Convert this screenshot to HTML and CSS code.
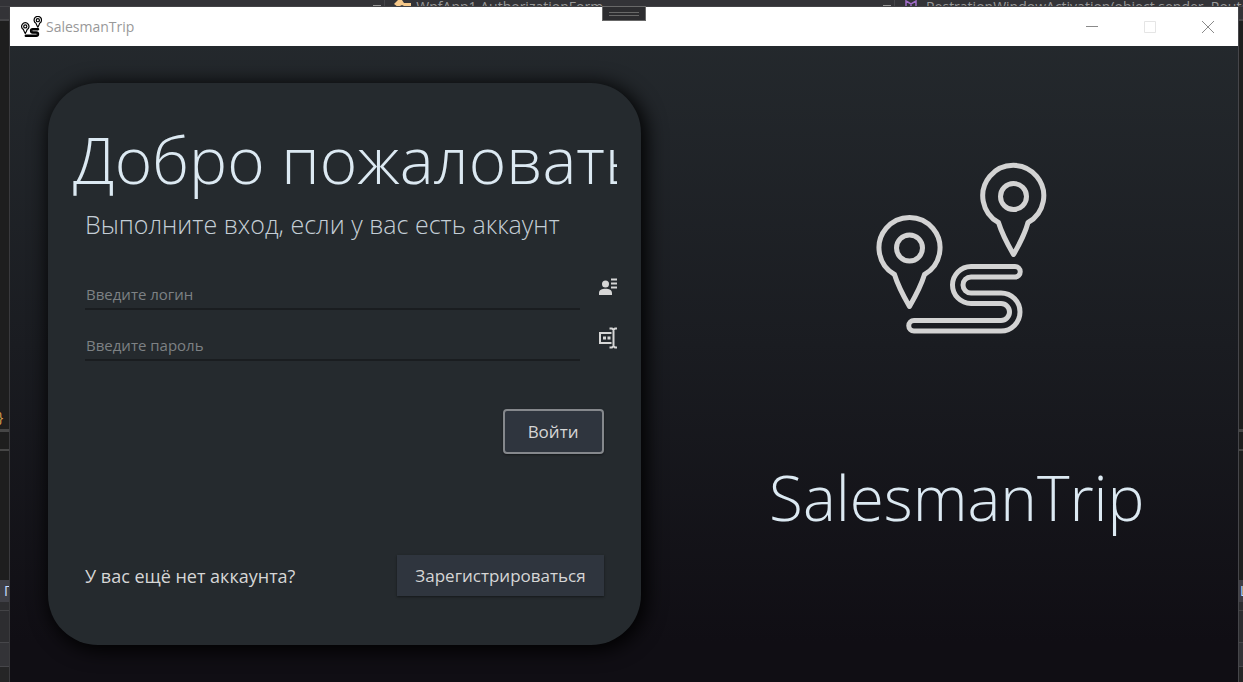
FILE: index.html
```html
<!DOCTYPE html>
<html lang="ru">
<head>
<meta charset="utf-8">
<title>SalesmanTrip</title>
<link rel="stylesheet" href="styles.css">
</head>
<body>
<svg class="defs" aria-hidden="true">
  <symbol id="route" viewBox="-1 -9 174 174">
    <g fill="none" stroke="currentColor" stroke-linejoin="round" stroke-linecap="round">
      <path d="M19.500 103.500 A30.500 30.500 0 1 1 49.500 103.500 C46 115 40 126 34.500 135.500 C29 126 23 115 19.500 103.500 Z"/>
      <circle cx="34.500" cy="77" r="13"/>
      <path d="M123.500 51.500 A30.500 30.500 0 1 1 153 51.500 C150 63 144 74 138.500 83.500 C133 74 127 63 123.500 51.500 Z"/>
      <circle cx="138.500" cy="25.500" r="13"/>
      <path d="M140 95.500 H96 A18.500 18.500 0 0 0 96 132.500 H126 A8.500 8.500 0 0 1 126 149.500 H39 A5 5 0 0 0 39 160 H126 A18.700 18.700 0 0 0 126 122 H96 A7.500 7.500 0 0 1 96 106 H140 A5.200 5.200 0 0 0 140 95.500 Z"/>
    </g>
  </symbol>
</svg>
<div class="desktop">
  <div class="ide-top">
    <div class="crumb crumb-empty"><span class="caret"></span></div>
    <div class="crumb crumb-class">
      <svg class="crumb-icon" viewBox="0 0 18 14" aria-hidden="true"><path fill="#f5c88a" d="M0 4 L4 0 H8 L10 3 H17 V7 H12 L8 5 L4 7 Z M9 8 H17 V12 H11 Z"/></svg>
      <span>WpfApp1.AuthorizationForm</span><span class="caret"></span>
    </div>
    <div class="crumb crumb-method">
      <svg class="crumb-icon crumb-small" viewBox="0 0 12 14" aria-hidden="true"><path fill="none" stroke="#a06cc8" stroke-width="1.500" d="M1 1 L6 4 L11 1 V10 L6 13 L1 10 Z M6 4 V13"/></svg>
      <span>RestrationWindowActivation(object sender, RoutedEventArgs e)</span>
    </div>
  </div>
  <div class="ide-side ide-left">
    <div class="side-head"></div>
    <div class="side-code"><span class="brace">}</span></div>
    <div class="side-bar"></div>
    <div class="side-blank"></div>
    <div class="side-tab">П</div>
    <div class="side-tools"></div>
    <div class="side-list"></div>
    <div class="side-foot"></div>
  </div>
  <main class="window">
    <header class="titlebar">
      <svg class="app-icon" aria-hidden="true"><use href="#route"/></svg>
      <span class="app-name">SalesmanTrip</span>
      <button class="win-btn" aria-label="Свернуть"><svg viewBox="0 0 12 12"><path d="M0 5.500 H12"/></svg></button>
      <button class="win-btn" aria-label="Развернуть" disabled><svg viewBox="0 0 12 12"><path d="M.500 .500 H11.500 V11.500 H.500 Z"/></svg></button>
      <button class="win-btn" aria-label="Закрыть"><svg viewBox="0 0 12 12"><path d="M0 0 L12 12 M12 0 L0 12"/></svg></button>
      <div class="grip"><span></span></div>
    </header>
    <div class="content">
      <form class="card">
        <h1>Добро пожаловать</h1>
        <p class="lead">Выполните вход, если у вас есть аккаунт</p>
        <div class="field">
          <input type="text" placeholder="Введите логин" aria-label="Введите логин">
          <svg class="field-icon" viewBox="0 0 18 22" aria-hidden="true"><g fill="#d6d6d6"><circle cx="6.500" cy="8" r="3.500"/><path d="M0 19 V17 C0 14 3 12.700 6.500 12.700 S13 14 13 17 V19 Z M12 2.500 H18 V4.500 H12 Z M12 6.500 H18 V8.500 H12 Z M12 10.500 H18 V12.500 H12 Z"/></g></svg>
        </div>
        <div class="field">
          <input type="password" placeholder="Введите пароль" aria-label="Введите пароль">
          <svg class="field-icon" viewBox="0 0 18 22" aria-hidden="true"><g fill="none" stroke="#d6d6d6" stroke-width="2"><path d="M12.500 6 H1 V16 H12.500 M10.500 1.500 H13 L14.500 3 L16 1.500 H18 M10.500 20.500 H13 L14.500 19 L16 20.500 H18 M14.500 2 V20"/></g><path fill="#d6d6d6" d="M4 9.500 H7 V12.500 H4 Z M8.500 9.500 H11.500 V12.500 H8.500 Z"/></svg>
        </div>
        <div class="actions"><button type="submit" class="btn btn-login">Войти</button></div>
        <div class="signup">
          <span>У вас ещё нет аккаунта?</span>
          <button type="button" class="btn">Зарегистрироваться</button>
        </div>
      </form>
      <section class="brand">
        <svg class="logo" aria-hidden="true"><use href="#route"/></svg>
        <h2>SalesmanTrip</h2>
      </section>
    </div>
  </main>
  <div class="ide-side ide-right">
    <div class="side-head"></div>
    <div class="side-code"></div>
    <div class="side-bar"></div>
    <div class="side-blank"></div>
    <div class="side-tab">Ц</div>
    <div class="side-tools"></div>
    <div class="side-list"></div>
    <div class="side-foot"></div>
  </div>
</div>
</body>
</html>
```
FILE: styles.css
```css
* { box-sizing: border-box; }
body {
  margin: 0;
  background: #1e1e1e;
  color: #d6d6d6;
  font-family: "Open Sans", "Noto Sans", sans-serif;
}
.defs { position: absolute; width: 0; height: 0; }
.desktop {
  display: grid;
  grid-template: 7px 1fr / 10px 1fr 5px;
  height: 100vh;
  overflow: hidden;
}
.ide-top {
  grid-column: 1 / -1;
  display: flex;
  overflow: hidden;
  background: #333337;
  border-bottom: 1px solid #434346;
  color: #999;
  font-size: 14px;
  line-height: 14px;
  white-space: nowrap;
}
.crumb { display: flex; gap: 4px; flex-shrink: 0; border-right: 1px solid #46464a; }
.crumb-empty { width: 31%; justify-content: flex-end; padding-right: 3px; }
.crumb-class { width: 41%; padding: 0 3px 0 9px; }
.crumb-method { flex: 1 1 0; padding-left: 10px; gap: 9px; border: 0; }
.crumb-icon { width: 18px; height: 14px; }
.crumb-small { width: 12px; }
.caret {
  margin: 5px 0 0 auto;
  width: 8px;
  height: 4px;
  background: #999;
}
.ide-side { display: flex; flex-direction: column; overflow: hidden; font-size: 14px; }
.ide-left { border-right: 1px solid #3a3a3d; }
.ide-right { border-left: 1px solid #46464a; }
.side-head { height: 14px; background: #333337; border-bottom: 2px solid #434346; flex-shrink: 0; }
.side-code { flex: 1; display: flex; align-items: flex-end; overflow: hidden; }
.brace { color: #d69d4a; margin-left: -2px; line-height: 24px; }
.side-bar { height: 22px; border: solid #464646; border-width: 3px 0 2px; flex-shrink: 0; }
.side-blank { height: 129px; flex-shrink: 0; }
.side-tab { height: 22px; background: #3f3f46; color: #c8dcff; padding-left: 4px; line-height: 22px; flex-shrink: 0; }
.ide-right .side-tab { padding-left: 1px; }
.side-tools { height: 40px; background: #2d2d30; border-top: 8px solid #2d2d30; box-shadow: inset 0 1px #434346; flex-shrink: 0; }
.side-list { height: 25px; background: #333337; border: solid #46464a; border-width: 1px 0; flex-shrink: 0; }
.side-foot { height: 15px; flex-shrink: 0; background: #252526; }
.window {
  display: flex;
  flex-direction: column;
  min-width: 0;
  background: linear-gradient(#252a2e, #1a1c21 50%, #100e14 94%);
}
.titlebar {
  position: relative;
  display: flex;
  align-items: center;
  height: 39px;
  flex-shrink: 0;
  padding: 0 1px 0 11px;
  background: #fff;
}
.app-icon { width: 21px; height: 21px; color: #000; stroke-width: 10; margin-right: 4px; }
.app-name { flex: 1; color: #999; font-size: 14px; }
.win-btn {
  display: grid;
  place-items: center;
  width: 58px;
  height: 39px;
  padding: 0;
  border: 0;
  background: none;
}
.win-btn svg { width: 12px; height: 12px; fill: none; stroke: #8a8a8a; overflow: visible; }
.win-btn:disabled svg { stroke: #e5e5e5; }
.grip {
  position: absolute;
  top: -1px;
  left: 50%;
  margin-left: -22px;
  width: 44px;
  height: 15px;
  display: grid;
  place-items: center;
  background: #2d2d30;
  border: 1px solid #686868;
}
.grip span { width: 30px; height: 4px; border: solid #686868; border-width: 1px 0; }
.content {
  flex: 1;
  display: grid;
  grid-template-columns: 542fr 458fr;
  min-height: 0;
}
.card {
  display: flex;
  flex-direction: column;
  min-width: 0;
  margin: 37px 35px 37px 38px;
  padding: 33px 24px 49px 25px;
  border-radius: 50px;
  background: #252a2e;
  box-shadow: 3px 3px 20px 2px #000;
}
h1, h2 { margin: 0; font-weight: 300; color: #dce9f2; white-space: nowrap; }
h1 { overflow: hidden; font-size: 64px; line-height: 88px; margin-bottom: 4px; }
.lead { margin: 0 12px; font-size: 25px; font-weight: 300; line-height: 32px; color: #c4ced6; white-space: nowrap; }
.field { display: flex; justify-content: space-between; gap: 19px; padding-left: 12px; height: 34px; margin-bottom: 17px; }
.lead + .field { margin-top: 36px; }
.field input {
  flex: 1;
  min-width: 0;
  padding: 3px 1px 0;
  border: 0;
  border-bottom: 2px solid #1a1d20;
  outline: 0;
  background: none;
  color: #d6d6d6;
  font: 500 15px/20px "Open Sans", "Noto Sans", sans-serif;
}
.field input::placeholder { color: #7d8184; opacity: 1; }
.field-icon { width: 18px; height: 22px; flex-shrink: 0; }
.actions { display: flex; justify-content: flex-end; padding: 31px 13px 0 0; }
.btn {
  height: 41px;
  padding: 0 18px;
  border: 0;
  background: #2f353e;
  color: #d6d6d6;
  font: 17px/24px "Open Sans", "Noto Sans", sans-serif;
  box-shadow: 0 1px 2px #15181a;
}
.btn-login { width: 101px; height: 45px; border: 2px solid #85888c; border-radius: 4px; }
.signup {
  display: flex;
  align-items: center;
  justify-content: space-between;
  margin-top: auto;
  padding: 0 13px 0 12px;
  font-size: 18px;
  white-space: nowrap;
}
.brand { display: flex; flex-direction: column; align-items: center; padding-top: 116px; min-width: 0; }
.logo { width: 174px; height: 174px; color: #d3d3d3; stroke-width: 5; margin-left: 8px; }
.brand h2 { margin-top: 117px; font-size: 62px; line-height: 88px; }
```
